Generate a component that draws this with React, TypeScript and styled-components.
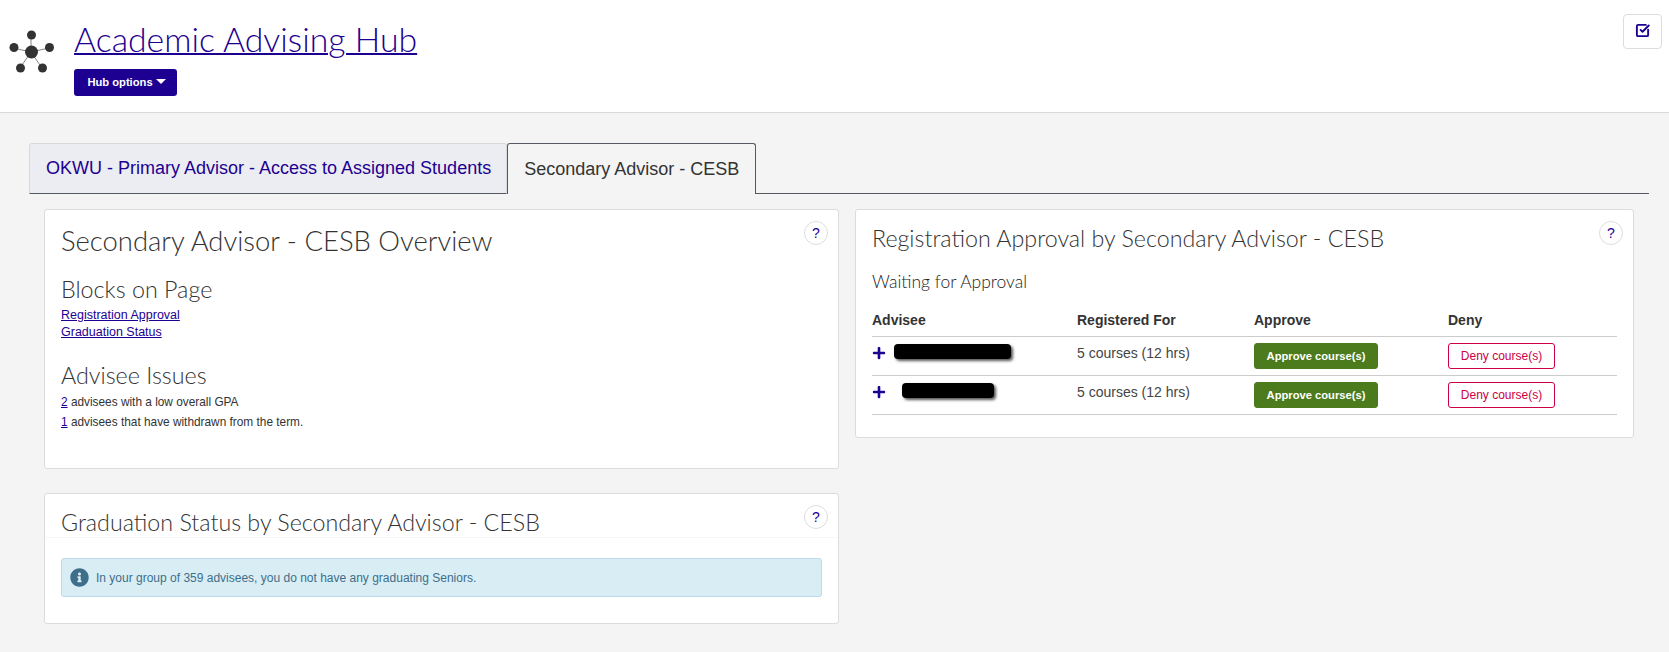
import React from 'react';
import styled, { createGlobalStyle } from 'styled-components';
import { FaInfoCircle, FaPlus } from 'react-icons/fa';
import { SquareCheckBig } from 'lucide-react';

const Global = createGlobalStyle`
  html, body { margin: 0; padding: 0; background: #f4f4f4; }
  body { font-family: "Liberation Sans", Arial, sans-serif; color: #333; }
  * { box-sizing: border-box; }
`;

const Header = styled.header`
  height: 113px;
  background: #fff;
  border-bottom: 1px solid #d9d9d9;
  display: flex;
  justify-content: space-between;
  padding: 14px 7px 0 8px;
`;

const Brand = styled.div`
  display: flex;
  gap: 20px;
`;

const LogoWrap = styled.div`
  width: 46px;
  padding-top: 16px;
`;

const TitleBlock = styled.div`
  display: flex;
  flex-direction: column;
  align-items: flex-start;
  padding-top: 5px;
`;

const Title = styled.a`
  font-family: Lato, sans-serif;
  font-weight: 300;
  font-size: 33.8px;
  line-height: 40px;
  color: #1d0091;
  text-decoration: underline;
  text-decoration-thickness: 2px;
`;

const HubButton = styled.button`
  margin-top: 10px;
  height: 27px;
  width: 103px;
  background: #1d0091;
  color: #fff;
  border: 0;
  border-radius: 3px;
  font: bold 11.2px "Liberation Sans", Arial, sans-serif;
  display: flex;
  align-items: center;
  justify-content: center;
  gap: 3px;
  padding: 0 0 2px 2px;
`;

const Caret = styled.span`
  width: 0;
  height: 0;
  border-left: 5px solid transparent;
  border-right: 5px solid transparent;
  border-top: 5px solid #fff;
`;

const CheckButton = styled.button`
  width: 39px;
  height: 35px;
  background: #fff;
  border: 1px solid #ddd;
  border-radius: 4px;
  color: #1d0091;
  display: flex;
  align-items: center;
  justify-content: center;
  padding: 0 0 3px;
`;

const Main = styled.main`
  padding: 30px 20px 0 29px;
`;

const Tabs = styled.nav`
  display: flex;
  height: 51px;
  border-bottom: 1px solid #555a60;
`;

const Tab = styled.div<{ $active?: boolean }>`
  height: 51px;
  padding: 0 ${p => (p.$active ? 16 : 15)}px 0 16px;
  display: flex;
  align-items: center;
  font-size: 18px;
  border: 1px solid ${p => (p.$active ? '#555a60' : '#d8d8dc')};
  border-bottom: ${p => (p.$active ? '0' : '1px solid #555a60')};
  border-radius: 3px 3px 0 0;
  background: ${p => (p.$active ? '#f4f4f4' : '#ecedf2')};
  color: ${p => (p.$active ? '#333' : '#1d0091')};
`;

const Columns = styled.div`
  display: grid;
  grid-template-columns: 795px 779px;
  column-gap: 16px;
  align-items: start;
  padding: 15px 0 0 15px;
`;

const Stack = styled.div`
  display: flex;
  flex-direction: column;
  gap: 24px;
`;

const Card = styled.section<{ $height: number }>`
  position: relative;
  height: ${p => p.$height}px;
  background: #fff;
  border: 1px solid #dcdcdc;
  border-radius: 3px;
  padding: 0 16px;
`;

const Help = styled.button`
  position: absolute;
  top: 11px;
  right: 10px;
  width: 24px;
  height: 24px;
  border-radius: 50%;
  background: #fff;
  border: 1px solid #ddd;
  color: #1d0091;
  font: 14px "Liberation Sans", Arial, sans-serif;
  padding: 0;
`;

const OverviewTitle = styled.h1`
  margin: 12px 0 0;
  font: 300 27.45px/38px Lato, sans-serif;
  color: #333;
`;

const SectionTitle = styled.h2<{ $top: number }>`
  margin: ${p => p.$top}px 0 0;
  font: 300 23.3px/28px Lato, sans-serif;
  color: #333;
`;

const CardTitle = styled.h2`
  margin: 13px 0 0;
  font: 300 23.25px/30px Lato, sans-serif;
  color: #333;
`;

const LinkLine = styled.div`
  font-size: 12.5px;
  line-height: 17px;
  color: #333;
`;

const Plain = styled.a`
  color: #1d0091;
  text-decoration: underline;
`;

const LinkList = styled.div`
  margin-top: 4px;
`;

const IssueList = styled.div`
  margin-top: 3px;
  ${LinkLine} {
    font-size: 11.85px;
    line-height: 20px;
  }
`;

const Divider = styled.div`
  height: 1px;
  background: #f7f7f7;
  margin: 0 -16px;
`;

const Alert = styled.div`
  margin-top: 20px;
  height: 39px;
  background: #d9edf5;
  border: 1px solid #bcdae8;
  border-radius: 3px;
  display: flex;
  align-items: center;
  gap: 7px;
  padding: 0 8px;
  font-size: 12px;
  color: #3e6f8a;
`;

const Subhead = styled.h3`
  margin: 17px 0 0;
  font: 300 17.5px/24px Lato, sans-serif;
  color: #222;
`;

const Table = styled.table`
  margin-top: 11px;
  width: 745px;
  border-collapse: collapse;
  table-layout: fixed;
  font-size: 14px;
  th {
    text-align: left;
    font-size: 14px;
    height: 31px;
    padding: 0;
    color: #333;
  }
  tr {
    border-bottom: 1px solid #ccc;
  }
  td {
    padding: 0;
    height: 39px;
    vertical-align: top;
  }
`;

const AdviseeCell = styled.div`
  display: flex;
  align-items: center;
  height: 25px;
  margin-top: 2px;
  color: #1d0091;
  gap: 8px;
`;

const PlusIcon = styled(FaPlus)`
  margin-top: 4px;
  flex: none;
`;

const Redacted = styled.span<{ $width: number; $indent: number }>`
  display: block;
  width: ${p => p.$width}px;
  height: 15px;
  margin-left: ${p => p.$indent}px;
  background: #000;
  border-radius: 4px;
  box-shadow: 2px 2px 3px #555;
`;

const Courses = styled.div`
  margin-top: 8px;
  color: #444;
`;

const ActionButton = styled.button<{ $deny?: boolean }>`
  margin-top: 6px;
  height: 26px;
  width: ${p => (p.$deny ? 107 : 124)}px;
  border-radius: 3px;
  font: ${p => (p.$deny ? 'normal 12px' : 'bold 11.2px')} "Liberation Sans", Arial, sans-serif;
  background: ${p => (p.$deny ? '#fff' : '#4c7b1d')};
  color: ${p => (p.$deny ? '#cc0044' : '#fff')};
  border: 1px solid ${p => (p.$deny ? '#cc0044' : '#4c7b1d')};
  padding: 0;
`;

const Logo = () => (
  <svg width="46" height="44" viewBox="0 0 46 44">
    <g stroke="#666" strokeWidth="0.8">
      <line x1="23" y1="22" x2="23" y2="5" />
      <line x1="23" y1="22" x2="5" y2="18" />
      <line x1="23" y1="22" x2="41" y2="18" />
      <line x1="23" y1="22" x2="12" y2="38" />
      <line x1="23" y1="22" x2="34" y2="38" />
    </g>
    <g fill="#333">
      <circle cx="23.5" cy="22" r="6.5" />
      <circle cx="23.5" cy="5" r="4.5" />
      <circle cx="6" cy="17.5" r="4.5" />
      <circle cx="41.5" cy="17.5" r="4.5" />
      <circle cx="12.5" cy="38" r="4.5" />
      <circle cx="34.5" cy="38" r="4.5" />
    </g>
  </svg>
);

const rows = [
  { width: 117, indent: 0 },
  { width: 92, indent: 8 },
];

export default function App() {
  return (
    <>
      <Global />
      <Header>
        <Brand>
          <LogoWrap>
            <Logo />
          </LogoWrap>
          <TitleBlock>
            <Title>Academic Advising Hub</Title>
            <HubButton>
              Hub options <Caret />
            </HubButton>
          </TitleBlock>
        </Brand>
        <CheckButton>
          <SquareCheckBig size={15} strokeWidth={3} />
        </CheckButton>
      </Header>
      <Main>
        <Tabs>
          <Tab>OKWU - Primary Advisor - Access to Assigned Students</Tab>
          <Tab $active>Secondary Advisor - CESB</Tab>
        </Tabs>
        <Columns>
          <Stack>
            <Card $height={260}>
              <Help>?</Help>
              <OverviewTitle>Secondary Advisor - CESB Overview</OverviewTitle>
              <SectionTitle $top={15}>Blocks on Page</SectionTitle>
              <LinkList>
                <LinkLine><Plain>Registration Approval</Plain></LinkLine>
                <LinkLine><Plain>Graduation Status</Plain></LinkLine>
              </LinkList>
              <SectionTitle $top={20}>Advisee Issues</SectionTitle>
              <IssueList>
                <LinkLine><Plain>2</Plain> advisees with a low overall GPA</LinkLine>
                <LinkLine><Plain>1</Plain> advisees that have withdrawn from the term.</LinkLine>
              </IssueList>
            </Card>
            <Card $height={131}>
              <Help>?</Help>
              <CardTitle>Graduation Status by Secondary Advisor - CESB</CardTitle>
              <Divider />
              <Alert>
                <FaInfoCircle size={19} color="#3e6f8a" />
                In your group of 359 advisees, you do not have any graduating Seniors.
              </Alert>
            </Card>
          </Stack>
          <Card $height={229}>
            <Help>?</Help>
            <CardTitle>Registration Approval by Secondary Advisor - CESB</CardTitle>
            <Subhead>Waiting for Approval</Subhead>
            <Table>
              <colgroup>
                <col width="205" />
                <col width="177" />
                <col width="194" />
                <col width="169" />
              </colgroup>
              <thead>
                <tr>
                  <th>Advisee</th>
                  <th>Registered For</th>
                  <th>Approve</th>
                  <th>Deny</th>
                </tr>
              </thead>
              <tbody>
                {rows.map((row, i) => (
                  <tr key={i}>
                    <td>
                      <AdviseeCell>
                        <PlusIcon size={14} />
                        <Redacted $width={row.width} $indent={row.indent} />
                      </AdviseeCell>
                    </td>
                    <td><Courses>5 courses (12 hrs)</Courses></td>
                    <td><ActionButton>Approve course(s)</ActionButton></td>
                    <td><ActionButton $deny>Deny course(s)</ActionButton></td>
                  </tr>
                ))}
              </tbody>
            </Table>
          </Card>
        </Columns>
      </Main>
    </>
  );
}
